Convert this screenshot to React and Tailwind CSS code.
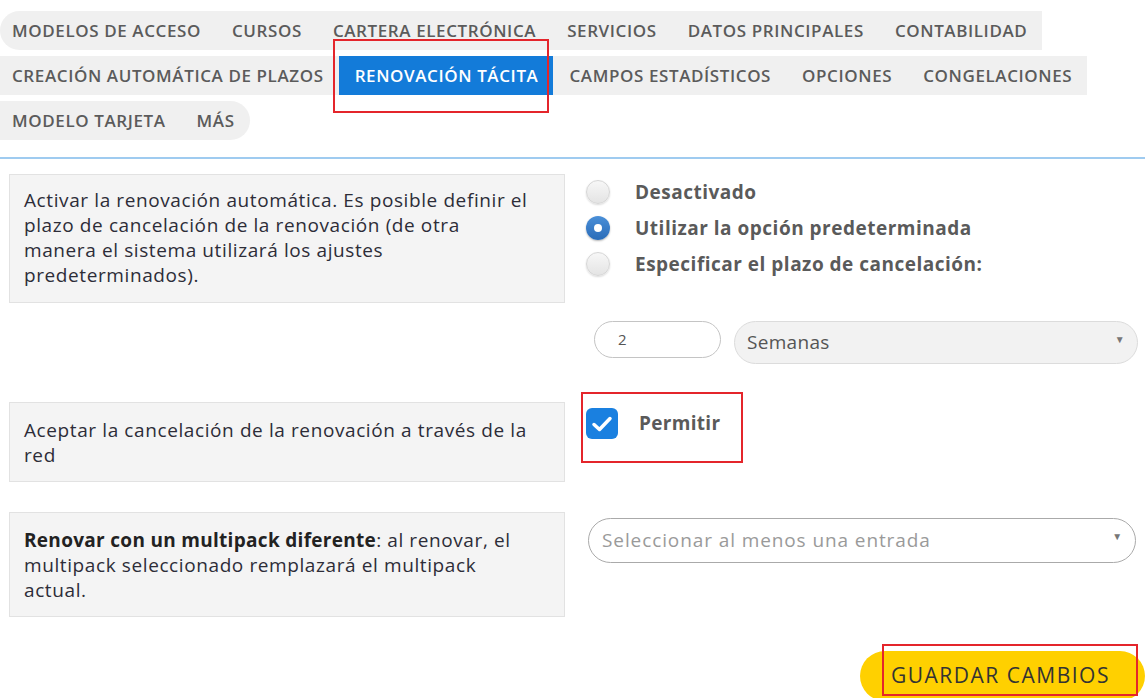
import React from "react";

const tabRows = [
  ["MODELOS DE ACCESO", "CURSOS", "CARTERA ELECTRÓNICA", "SERVICIOS", "DATOS PRINCIPALES", "CONTABILIDAD"],
  ["CREACIÓN AUTOMÁTICA DE PLAZOS", "RENOVACIÓN TÁCITA", "CAMPOS ESTADÍSTICOS", "OPCIONES", "CONGELACIONES"],
  ["MODELO TARJETA", "MÁS"],
];

const Radio = ({ checked, label }) => (
  <div className="flex items-center h-[36px]">
    {checked ? (
      <span className="w-[24px] h-[24px] rounded-full bg-gradient-to-b from-[#4a8fd8] to-[#2a6cb8] flex items-center justify-center shadow-[0_1px_2px_rgba(0,0,0,0.3)]">
        <span className="w-[8px] h-[8px] rounded-full bg-white" />
      </span>
    ) : (
      <span className="w-[24px] h-[24px] rounded-full bg-gradient-to-b from-[#f7f7f7] to-[#e4e4e4] border border-[#d6d6d6] shadow-[0_1px_2px_rgba(0,0,0,0.15)]" />
    )}
    <span className="ml-[25px] text-[19px] tracking-[0.5px] font-bold text-[#5a5a5a]">{label}</span>
  </div>
);

const Arrow = () => (
  <span className="absolute right-[12px] top-[10px] text-[10px] text-[#777]">▼</span>
);

const boxText = "w-[556px] shrink-0 bg-[#f4f4f4] border border-[#e2e2e2] px-[14px] text-[19px] tracking-[0.6px] leading-[25px] text-[#2d2d38] whitespace-nowrap";

export default function App() {
  return (
    <div className="w-[1145px] h-[698px] overflow-hidden bg-white" style={{ fontFamily: "'Open Sans', Lato, sans-serif" }}>
      {/* tabs */}
      <nav className="pt-[11px] flex flex-col gap-[6px]">
        {tabRows.map((row, ri) => (
          <div
            key={ri}
            className={`flex w-fit h-[39px] bg-[#f0f0f0] ${ri === 0 ? "rounded-l-full" : ""} ${ri === 2 ? "rounded-r-full" : ""}`}
          >
            {row.map((t, i) => {
              const active = t === "RENOVACIÓN TÁCITA";
              return (
                <div
                  key={t}
                  className={`relative h-full flex items-center text-[17px] tracking-[0.6px] font-semibold whitespace-nowrap ${i === 0 ? "pl-[12px]" : "pl-[16px]"} pr-[15px] ${active ? "bg-[#137bd9] text-white" : "text-[#5b5b5b]"}`}
                >
                  {t}
                  {active && (
                    <span className="absolute left-[-6px] top-[-17px] w-[216px] h-[74px] border-2 border-[#e4252b]" />
                  )}
                </div>
              );
            })}
          </div>
        ))}
      </nav>

      <div className="mt-[17px] h-[2px] bg-[#9fcbf0]" />

      <div className="px-[9px] pt-[15px]">
        {/* row 1 */}
        <div className="flex items-start">
          <div className={`${boxText} h-[129px] pt-[13px]`}>
            Activar la renovación automática. Es posible definir el<br />
            plazo de cancelación de la renovación (de otra<br />
            manera el sistema utilizará los ajustes<br />
            predeterminados).
          </div>
          <div className="ml-[21px] flex-1">
            <Radio label="Desactivado" />
            <Radio checked label="Utilizar la opción predeterminada" />
            <Radio label="Especificar el plazo de cancelación:" />
            <div className="mt-[39px] flex items-start">
              <div className="ml-[8px] w-[127px] h-[37px] rounded-full border border-[#c4c4c4] bg-white flex items-center pl-[23px] text-[15px] text-[#555]">
                2
              </div>
              <div className="relative ml-[13px] w-[404px] h-[43px] rounded-full border border-[#dcdcdc] bg-[#f2f2f2] flex items-center pl-[12px] text-[19px] tracking-[0.3px] text-[#555]">
                Semanas
                <Arrow />
              </div>
            </div>
          </div>
        </div>

        {/* row 2 */}
        <div className="mt-[38px] flex items-start">
          <div className={`${boxText} h-[80px] pt-[15px]`}>
            Aceptar la cancelación de la renovación a través de la<br />
            red
          </div>
          <div className="relative ml-[21px] mt-[6px] flex items-start">
            <span className="w-[32px] h-[31px] rounded-[6px] bg-[#1a80e0] flex items-center justify-center">
              <svg width="22" height="18" viewBox="0 0 22 18" fill="none">
                <path d="M3 9.5 L8.5 14.5 L19 3.5" stroke="white" strokeWidth="3.5" strokeLinecap="round" strokeLinejoin="round" />
              </svg>
            </span>
            <span className="ml-[21px] mt-[1px] text-[19px] tracking-[0.3px] font-bold text-[#5a5a5a]">Permitir</span>
            <span className="absolute left-[-5px] top-[-16px] w-[162px] h-[71px] border-2 border-[#e4252b]" />
          </div>
        </div>

        {/* row 3 */}
        <div className="mt-[30px] flex items-start">
          <div className={`${boxText} h-[105px] pt-[15px]`}>
            <b className="font-bold tracking-[0.3px] text-[#222]">Renovar con un multipack diferente</b>: al renovar, el<br />
            multipack seleccionado remplazará el multipack<br />
            actual.
          </div>
          <div className="relative ml-[23px] mt-[6px] w-[555px] h-[45px] rounded-full border border-[#aaa] bg-white flex items-center pl-[13px] text-[19px] tracking-[0.9px] text-[#9a9a9a]">
            Seleccionar al menos una entrada
            <Arrow />
          </div>
        </div>

        {/* save */}
        <div className="mt-[34px] flex justify-end mr-[-9px]">
          <div className="relative w-[285px] h-[50px] rounded-full bg-[#ffd000] flex items-center pl-[31px] text-[21px] tracking-[1.5px] text-[#333]">
            GUARDAR CAMBIOS
            <span className="absolute left-[22px] top-[-7px] w-[256px] h-[52px] border-2 border-[#e4252b]" />
          </div>
        </div>
      </div>
    </div>
  );
}
